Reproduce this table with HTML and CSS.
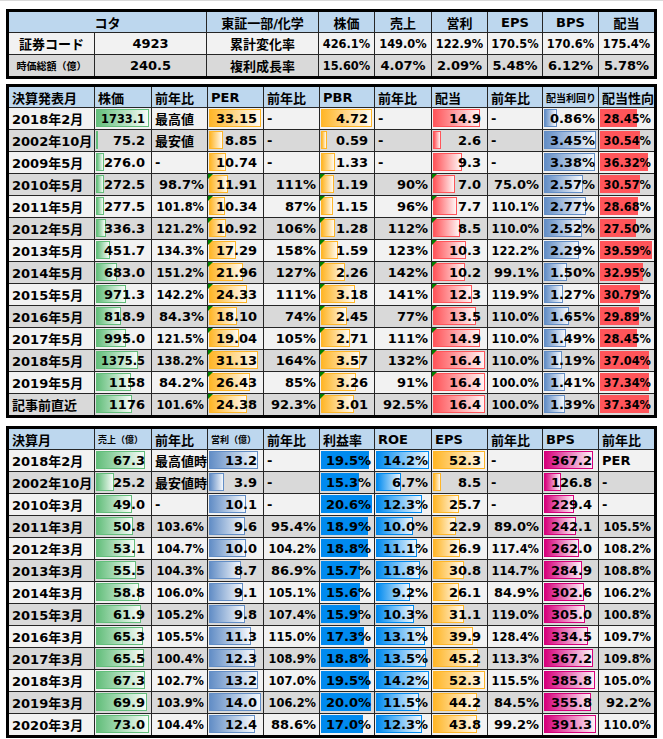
FILE: index.html
```html
<!DOCTYPE html>
<html lang="ja">
<head>
<meta charset="utf-8">
<title>コタ</title>
<link rel="stylesheet" href="styles.css">
</head>
<body>
<div class="tbl t1">
  <div class="row hd"><div class="m sp2">コタ</div><div class="m">東証一部/化学</div><div class="m">株価</div><div class="m">売上</div><div class="m">営利</div><div class="m">EPS</div><div class="m">BPS</div><div class="m">配当</div></div>
  <div class="row lt"><div class="m">証券コード</div><div class="m">4923</div><div class="m">累計変化率</div><div class="m s">426.1%</div><div class="m s">149.0%</div><div class="m s">122.9%</div><div class="m s">170.5%</div><div class="m s">170.6%</div><div class="m s">175.4%</div></div>
  <div class="row dk"><div class="m x">時価総額（億）</div><div class="m">240.5</div><div class="m">複利成長率</div><div class="m s">15.60%</div><div class="m">4.07%</div><div class="m">2.09%</div><div class="m">5.48%</div><div class="m">6.12%</div><div class="m">5.78%</div></div>
</div>

<div class="tbl t2">
  <div class="row hd"><div>決算発表月</div><div>株価</div><div>前年比</div><div>PER</div><div>前年比</div><div>PBR</div><div>前年比</div><div>配当</div><div>前年比</div><div class="x">配当利回り</div><div>配当性向</div></div>
  <div class="row lt"><div>2018年2月</div><div class="n"><i class="g" style="--w:1"></i><span class="s">1733.1</span></div><div>最高値</div><div class="n"><i class="o" style="--w:1"></i><span>33.15</span></div><div>-</div><div class="n"><i class="o" style="--w:1"></i><span>4.72</span></div><div>-</div><div class="n"><i class="r" style="--w:.909"></i><span>14.9</span></div><div>-</div><div class="p"><i class="b" style="--w:.249"></i><span>0.86%</span></div><div class="p"><i class="rs" style="--w:.719"></i><span class="s">28.45%</span></div></div>
  <div class="row dk"><div>2002年10月</div><div class="n"><i class="g" style="--w:.043"></i><span>75.2</span></div><div>最安値</div><div class="n"><i class="o" style="--w:.267"></i><span>8.85</span></div><div>-</div><div class="n"><i class="o" style="--w:.125"></i><span>0.59</span></div><div>-</div><div class="n"><i class="r" style="--w:.159"></i><span>2.6</span></div><div>-</div><div class="p"><i class="b" style="--w:1"></i><span>3.45%</span></div><div class="p"><i class="rs" style="--w:.771"></i><span class="s">30.54%</span></div></div>
  <div class="row lt"><div>2009年5月</div><div class="n"><i class="g" style="--w:.159"></i><span>276.0</span></div><div>-</div><div class="n"><i class="o" style="--w:.324"></i><span>10.74</span></div><div>-</div><div class="n"><i class="o" style="--w:.282"></i><span>1.33</span></div><div>-</div><div class="n"><i class="r" style="--w:.567"></i><span>9.3</span></div><div>-</div><div class="p"><i class="b" style="--w:.98"></i><span>3.38%</span></div><div class="p"><i class="rs" style="--w:.917"></i><span class="s">36.32%</span></div></div>
  <div class="row dk"><div>2010年5月</div><div class="n"><i class="g" style="--w:.157"></i><span>272.5</span></div><div class="p">98.7%</div><div class="n"><i class="o" style="--w:.359"></i><b></b><span>11.91</span></div><div class="p">111%</div><div class="n"><i class="o" style="--w:.252"></i><b></b><span>1.19</span></div><div class="p">90%</div><div class="n"><i class="r" style="--w:.427"></i><b></b><span>7.0</span></div><div class="p">75.0%</div><div class="p"><i class="b" style="--w:.745"></i><span>2.57%</span></div><div class="p"><i class="rs" style="--w:.772"></i><span class="s">30.57%</span></div></div>
  <div class="row lt"><div>2011年5月</div><div class="n"><i class="g" style="--w:.16"></i><span>277.5</span></div><div class="p s">101.8%</div><div class="n"><i class="o" style="--w:.312"></i><b></b><span>10.34</span></div><div class="p">87%</div><div class="n"><i class="o" style="--w:.244"></i><b></b><span>1.15</span></div><div class="p">96%</div><div class="n"><i class="r" style="--w:.47"></i><b></b><span>7.7</span></div><div class="p s">110.1%</div><div class="p"><i class="b" style="--w:.803"></i><span>2.77%</span></div><div class="p"><i class="rs" style="--w:.724"></i><span class="s">28.68%</span></div></div>
  <div class="row dk"><div>2012年5月</div><div class="n"><i class="g" style="--w:.194"></i><span>336.3</span></div><div class="p s">121.2%</div><div class="n"><i class="o" style="--w:.329"></i><b></b><span>10.92</span></div><div class="p">106%</div><div class="n"><i class="o" style="--w:.271"></i><b></b><span>1.28</span></div><div class="p">112%</div><div class="n"><i class="r" style="--w:.518"></i><b></b><span>8.5</span></div><div class="p s">110.0%</div><div class="p"><i class="b" style="--w:.73"></i><span>2.52%</span></div><div class="p"><i class="rs" style="--w:.695"></i><span class="s">27.50%</span></div></div>
  <div class="row lt"><div>2013年5月</div><div class="n"><i class="g" style="--w:.261"></i><span>451.7</span></div><div class="p s">134.3%</div><div class="n"><i class="o" style="--w:.522"></i><b></b><span>17.29</span></div><div class="p">158%</div><div class="n"><i class="o" style="--w:.337"></i><b></b><span>1.59</span></div><div class="p">123%</div><div class="n"><i class="r" style="--w:.628"></i><b></b><span>10.3</span></div><div class="p s">122.2%</div><div class="p"><i class="b" style="--w:.664"></i><span>2.29%</span></div><div class="p"><i class="rs" style="--w:1"></i><span class="s">39.59%</span></div></div>
  <div class="row dk"><div>2014年5月</div><div class="n"><i class="g" style="--w:.394"></i><span>683.0</span></div><div class="p s">151.2%</div><div class="n"><i class="o" style="--w:.662"></i><b></b><span>21.96</span></div><div class="p">127%</div><div class="n"><i class="o" style="--w:.479"></i><b></b><span>2.26</span></div><div class="p">142%</div><div class="n"><i class="r" style="--w:.622"></i><b></b><span>10.2</span></div><div class="p">99.1%</div><div class="p"><i class="b" style="--w:.435"></i><span>1.50%</span></div><div class="p"><i class="rs" style="--w:.832"></i><span class="s">32.95%</span></div></div>
  <div class="row lt"><div>2015年5月</div><div class="n"><i class="g" style="--w:.56"></i><span>971.3</span></div><div class="p s">142.2%</div><div class="n"><i class="o" style="--w:.734"></i><b></b><span>24.33</span></div><div class="p">111%</div><div class="n"><i class="o" style="--w:.674"></i><b></b><span>3.18</span></div><div class="p">141%</div><div class="n"><i class="r" style="--w:.75"></i><b></b><span>12.3</span></div><div class="p s">119.9%</div><div class="p"><i class="b" style="--w:.368"></i><span>1.27%</span></div><div class="p"><i class="rs" style="--w:.778"></i><span class="s">30.79%</span></div></div>
  <div class="row dk"><div>2016年5月</div><div class="n"><i class="g" style="--w:.473"></i><span>818.9</span></div><div class="p">84.3%</div><div class="n"><i class="o" style="--w:.546"></i><b></b><span>18.10</span></div><div class="p">74%</div><div class="n"><i class="o" style="--w:.519"></i><b></b><span>2.45</span></div><div class="p">77%</div><div class="n"><i class="r" style="--w:.823"></i><b></b><span>13.5</span></div><div class="p s">110.0%</div><div class="p"><i class="b" style="--w:.478"></i><span>1.65%</span></div><div class="p"><i class="rs" style="--w:.755"></i><span class="s">29.89%</span></div></div>
  <div class="row lt"><div>2017年5月</div><div class="n"><i class="g" style="--w:.574"></i><span>995.0</span></div><div class="p s">121.5%</div><div class="n"><i class="o" style="--w:.574"></i><b></b><span>19.04</span></div><div class="p">105%</div><div class="n"><i class="o" style="--w:.574"></i><b></b><span>2.71</span></div><div class="p">111%</div><div class="n"><i class="r" style="--w:.909"></i><b></b><span>14.9</span></div><div class="p s">110.0%</div><div class="p"><i class="b" style="--w:.432"></i><span>1.49%</span></div><div class="p"><i class="rs" style="--w:.719"></i><span class="s">28.45%</span></div></div>
  <div class="row dk"><div>2018年5月</div><div class="n"><i class="g" style="--w:.794"></i><span class="s">1375.5</span></div><div class="p s">138.2%</div><div class="n"><i class="o" style="--w:.939"></i><b></b><span>31.13</span></div><div class="p">164%</div><div class="n"><i class="o" style="--w:.756"></i><b></b><span>3.57</span></div><div class="p">132%</div><div class="n"><i class="r" style="--w:1"></i><b></b><span>16.4</span></div><div class="p s">110.0%</div><div class="p"><i class="b" style="--w:.345"></i><span>1.19%</span></div><div class="p"><i class="rs" style="--w:.936"></i><span class="s">37.04%</span></div></div>
  <div class="row lt"><div>2019年5月</div><div class="n"><i class="g" style="--w:.668"></i><span>1158</span></div><div class="p">84.2%</div><div class="n"><i class="o" style="--w:.797"></i><b></b><span>26.43</span></div><div class="p">85%</div><div class="n"><i class="o" style="--w:.691"></i><b></b><span>3.26</span></div><div class="p">91%</div><div class="n"><i class="r" style="--w:1"></i><b></b><span>16.4</span></div><div class="p s">100.0%</div><div class="p"><i class="b" style="--w:.409"></i><span>1.41%</span></div><div class="p"><i class="rs" style="--w:.943"></i><span class="s">37.34%</span></div></div>
  <div class="row dk"><div>記事前直近</div><div class="n"><i class="g" style="--w:.679"></i><span>1176</span></div><div class="p s">101.6%</div><div class="n"><i class="o" style="--w:.735"></i><b></b><span>24.38</span></div><div class="p">92.3%</div><div class="n"><i class="o" style="--w:.638"></i><b></b><span>3.01</span></div><div class="p">92.5%</div><div class="n"><i class="r" style="--w:1"></i><span>16.4</span></div><div class="p s">100.0%</div><div class="p"><i class="b" style="--w:.403"></i><span>1.39%</span></div><div class="p"><i class="rs" style="--w:.943"></i><span class="s">37.34%</span></div></div>
</div>

<div class="tbl t3">
  <div class="row hd"><div>決算月</div><div class="xx">売上（億）</div><div>前年比</div><div class="xx">営利（億）</div><div>前年比</div><div>利益率</div><div>ROE</div><div>EPS</div><div>前年比</div><div>BPS</div><div>前年比</div></div>
  <div class="row lt"><div>2018年2月</div><div class="n"><i class="g" style="--w:.922"></i><span>67.3</span></div><div>最高値時</div><div class="n"><i class="b" style="--w:.943"></i><span>13.2</span></div><div>-</div><div class="p"><i class="bs" style="--w:.947"></i><span>19.5%</span></div><div class="p"><i class="cy" style="--w:1"></i><span>14.2%</span></div><div class="n"><i class="o" style="--w:1"></i><span>52.3</span></div><div>-</div><div class="n"><i class="mg" style="--w:.938"></i><span>367.2</span></div><div>PER</div></div>
  <div class="row dk"><div>2002年10月</div><div class="n"><i class="g" style="--w:.345"></i><span>25.2</span></div><div>最安値時</div><div class="n"><i class="b" style="--w:.279"></i><span>3.9</span></div><div>-</div><div class="p"><i class="bs" style="--w:.743"></i><span>15.3%</span></div><div class="p"><i class="cy" style="--w:.472"></i><span>6.7%</span></div><div class="n"><i class="o" style="--w:.163"></i><span>8.5</span></div><div>-</div><div class="n"><i class="mg" style="--w:.324"></i><span>126.8</span></div><div>-</div></div>
  <div class="row lt"><div>2010年3月</div><div class="n"><i class="g" style="--w:.671"></i><span>49.0</span></div><div>-</div><div class="n"><i class="b" style="--w:.721"></i><span>10.1</span></div><div>-</div><div class="p"><i class="bs" style="--w:1"></i><span>20.6%</span></div><div class="p"><i class="cy" style="--w:.866"></i><span>12.3%</span></div><div class="n"><i class="o" style="--w:.491"></i><span>25.7</span></div><div>-</div><div class="n"><i class="mg" style="--w:.586"></i><span>229.4</span></div><div>-</div></div>
  <div class="row dk"><div>2011年3月</div><div class="n"><i class="g" style="--w:.696"></i><span>50.8</span></div><div class="p s">103.6%</div><div class="n"><i class="b" style="--w:.686"></i><span>9.6</span></div><div class="p">95.4%</div><div class="p"><i class="bs" style="--w:.917"></i><span>18.9%</span></div><div class="p"><i class="cy" style="--w:.704"></i><span>10.0%</span></div><div class="n"><i class="o" style="--w:.438"></i><span>22.9</span></div><div class="p">89.0%</div><div class="n"><i class="mg" style="--w:.619"></i><span>242.1</span></div><div class="p s">105.5%</div></div>
  <div class="row lt"><div>2012年3月</div><div class="n"><i class="g" style="--w:.727"></i><span>53.1</span></div><div class="p s">104.7%</div><div class="n"><i class="b" style="--w:.714"></i><span>10.0</span></div><div class="p s">104.2%</div><div class="p"><i class="bs" style="--w:.913"></i><span>18.8%</span></div><div class="p"><i class="cy" style="--w:.782"></i><span>11.1%</span></div><div class="n"><i class="o" style="--w:.514"></i><span>26.9</span></div><div class="p s">117.4%</div><div class="n"><i class="mg" style="--w:.67"></i><span>262.0</span></div><div class="p s">108.2%</div></div>
  <div class="row dk"><div>2013年3月</div><div class="n"><i class="g" style="--w:.76"></i><span>55.5</span></div><div class="p s">104.3%</div><div class="n"><i class="b" style="--w:.621"></i><span>8.7</span></div><div class="p">86.9%</div><div class="p"><i class="bs" style="--w:.762"></i><span>15.7%</span></div><div class="p"><i class="cy" style="--w:.831"></i><span>11.8%</span></div><div class="n"><i class="o" style="--w:.589"></i><span>30.8</span></div><div class="p s">114.7%</div><div class="n"><i class="mg" style="--w:.728"></i><span>284.9</span></div><div class="p s">108.8%</div></div>
  <div class="row lt"><div>2014年3月</div><div class="n"><i class="g" style="--w:.805"></i><span>58.8</span></div><div class="p s">106.0%</div><div class="n"><i class="b" style="--w:.65"></i><span>9.1</span></div><div class="p s">105.1%</div><div class="p"><i class="bs" style="--w:.757"></i><span>15.6%</span></div><div class="p"><i class="cy" style="--w:.648"></i><span>9.2%</span></div><div class="n"><i class="o" style="--w:.499"></i><span>26.1</span></div><div class="p">84.9%</div><div class="n"><i class="mg" style="--w:.773"></i><span>302.6</span></div><div class="p s">106.2%</div></div>
  <div class="row dk"><div>2015年3月</div><div class="n"><i class="g" style="--w:.848"></i><span>61.9</span></div><div class="p s">105.2%</div><div class="n"><i class="b" style="--w:.7"></i><span>9.8</span></div><div class="p s">107.4%</div><div class="p"><i class="bs" style="--w:.772"></i><span>15.9%</span></div><div class="p"><i class="cy" style="--w:.725"></i><span>10.3%</span></div><div class="n"><i class="o" style="--w:.595"></i><span>31.1</span></div><div class="p s">119.0%</div><div class="n"><i class="mg" style="--w:.779"></i><span>305.0</span></div><div class="p s">100.8%</div></div>
  <div class="row lt"><div>2016年3月</div><div class="n"><i class="g" style="--w:.895"></i><span>65.3</span></div><div class="p s">105.5%</div><div class="n"><i class="b" style="--w:.807"></i><span>11.3</span></div><div class="p s">115.0%</div><div class="p"><i class="bs" style="--w:.84"></i><span>17.3%</span></div><div class="p"><i class="cy" style="--w:.923"></i><span>13.1%</span></div><div class="n"><i class="o" style="--w:.763"></i><span>39.9</span></div><div class="p s">128.4%</div><div class="n"><i class="mg" style="--w:.855"></i><span>334.5</span></div><div class="p s">109.7%</div></div>
  <div class="row dk"><div>2017年3月</div><div class="n"><i class="g" style="--w:.897"></i><span>65.5</span></div><div class="p s">100.4%</div><div class="n"><i class="b" style="--w:.879"></i><span>12.3</span></div><div class="p s">108.9%</div><div class="p"><i class="bs" style="--w:.913"></i><span>18.8%</span></div><div class="p"><i class="cy" style="--w:.951"></i><span>13.5%</span></div><div class="n"><i class="o" style="--w:.864"></i><span>45.2</span></div><div class="p s">113.3%</div><div class="n"><i class="mg" style="--w:.938"></i><span>367.2</span></div><div class="p s">109.8%</div></div>
  <div class="row lt"><div>2018年3月</div><div class="n"><i class="g" style="--w:.922"></i><span>67.3</span></div><div class="p s">102.7%</div><div class="n"><i class="b" style="--w:.943"></i><span>13.2</span></div><div class="p s">107.0%</div><div class="p"><i class="bs" style="--w:.947"></i><span>19.5%</span></div><div class="p"><i class="cy" style="--w:1"></i><span>14.2%</span></div><div class="n"><i class="o" style="--w:1"></i><span>52.3</span></div><div class="p s">115.5%</div><div class="n"><i class="mg" style="--w:.986"></i><span>385.8</span></div><div class="p s">105.0%</div></div>
  <div class="row dk"><div>2019年3月</div><div class="n"><i class="g" style="--w:.958"></i><span>69.9</span></div><div class="p s">103.9%</div><div class="n"><i class="b" style="--w:1"></i><span>14.0</span></div><div class="p s">106.2%</div><div class="p"><i class="bs" style="--w:.971"></i><span>20.0%</span></div><div class="p"><i class="cy" style="--w:.81"></i><span>11.5%</span></div><div class="n"><i class="o" style="--w:.845"></i><span>44.2</span></div><div class="p">84.5%</div><div class="n"><i class="mg" style="--w:.909"></i><span>355.8</span></div><div class="p">92.2%</div></div>
  <div class="row lt"><div>2020年3月</div><div class="n"><i class="g" style="--w:1"></i><span>73.0</span></div><div class="p s">104.4%</div><div class="n"><i class="b" style="--w:.886"></i><span>12.4</span></div><div class="p">88.6%</div><div class="p"><i class="bs" style="--w:.825"></i><span>17.0%</span></div><div class="p"><i class="cy" style="--w:.866"></i><span>12.3%</span></div><div class="n"><i class="o" style="--w:.837"></i><span>43.8</span></div><div class="p">99.2%</div><div class="n"><i class="mg" style="--w:1"></i><span>391.3</span></div><div class="p s">110.0%</div></div>
</div>
</body>
</html>
```

FILE: styles.css
```css
* { box-sizing: border-box; margin: 0; padding: 0; }

body {
  background: #fff;
  border-top: 1px solid #d9d9d9;
  padding: 8px 0 0 6px;
  font-family: "DejaVu Sans", "Noto Sans CJK JP", sans-serif;
  font-weight: bold;
  font-size: 13px;
  color: #000;
}

.tbl {
  width: 651px;
  border: 3px solid #000;
  background: #262626;
  display: flex;
  flex-direction: column;
  gap: 1px;
}
.t2 { margin-top: 5px; }
.t3 { margin-top: 8px; }

.row {
  display: grid;
  column-gap: 1px;
  height: 21px;
}
.row.hd { height: 20px; }

.t1 .row { grid-template-columns: 85px 111px 111px 55px 56px 55px 54px 55px 55px; }
.t2 .row, .t3 .row { grid-template-columns: 85px 56px 55px 55px 55px 54px 56px 55px 54px 55px 55px; }

.hd > * { background: #bdd7ee; }
.lt > * { background: #f2f2f2; }
.dk > * { background: #d9d9d9; }

.row > div {
  position: relative;
  display: flex;
  align-items: center;
  padding: 0 3px;
  white-space: nowrap;
  overflow: hidden;
}
.row > .n { justify-content: flex-end; padding-right: 6px; }
.row > .p { justify-content: flex-end; padding-right: 3px; }
.row > .m { justify-content: center; padding: 0 1px; }
.sp2 { grid-column: span 2; }

.s { font-size: 11.4px; }
.x { font-size: 10px; }
.xx { font-size: 9px; }

.row span { position: relative; z-index: 1; }

/* data bars */
.row i {
  position: absolute;
  left: 1px;
  top: 1px;
  bottom: 2px;
  width: calc((100% - 3px) * var(--w));
  border: 1px solid;
}
.row i.g  { border-color: #63be7b; background: linear-gradient(90deg, #63be7b, #f7fcf8); }
.row i.o  { border-color: #ffb628; background: linear-gradient(90deg, #ffb628, #fffaf0); }
.row i.r  { border-color: #ff555a; background: linear-gradient(90deg, #ff555a, #fff4f4); }
.row i.b  { border-color: #638ec6; background: linear-gradient(90deg, #638ec6, #f5f8fc); }
.row i.cy { border-color: #008aef; background: linear-gradient(90deg, #008aef, #eef7fe); }
.row i.mg { border-color: #d6007b; background: linear-gradient(90deg, #d6007b, #fdf0f7); }
.row i.rs { border: 0; background: #ff555a; }
.row i.bs { border: 0; background: #008aef; }

/* error indicator triangles */
.row b {
  position: absolute;
  left: 0;
  top: 0;
  z-index: 2;
  width: 0;
  height: 0;
  border-top: 5px solid #008000;
  border-right: 5px solid transparent;
}
```
